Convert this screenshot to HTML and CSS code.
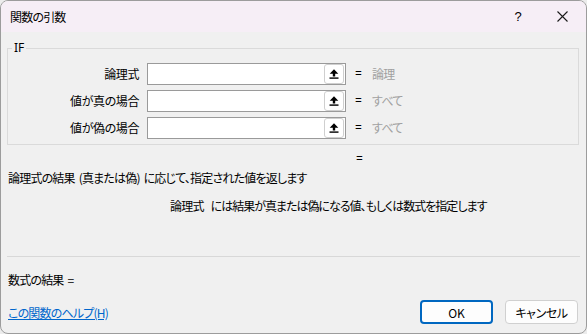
FILE: index.html
```html
<!DOCTYPE html>
<html lang="ja">
<head>
<meta charset="utf-8">
<title>関数の引数</title>
<link rel="stylesheet" href="styles.css">
</head>
<body>
<div class="window">
  <div class="titlebar">
    <span class="title">関数の引数</span>
    <span class="tb-help">?</span>
    <span class="tb-close">
      <svg width="11" height="11" viewBox="0 0 11 11"><path d="M0.5 0.5 L10.5 10.5 M10.5 0.5 L0.5 10.5" stroke="#1a1a1a" stroke-width="1.1" fill="none"/></svg>
    </span>
  </div>
  <div class="content">
    <fieldset class="group">
      <legend class="legend">IF</legend>
      <div class="args">
        <label class="arg-label">論理式</label>
        <div class="arg-input"><span class="collapse"><svg width="10" height="10" viewBox="0 0 10 10"><path d="M5 0.3 L9.3 4.8 L6.2 4.8 L6.2 7.4 L3.8 7.4 L3.8 4.8 L0.7 4.8 Z" fill="#000"/><rect x="0.5" y="8.4" width="9" height="1.4" fill="#000"/></svg></span></div>
        <span class="eq">=</span>
        <span class="arg-val">論理</span>

        <label class="arg-label">値が真の場合</label>
        <div class="arg-input"><span class="collapse"><svg width="10" height="10" viewBox="0 0 10 10"><path d="M5 0.3 L9.3 4.8 L6.2 4.8 L6.2 7.4 L3.8 7.4 L3.8 4.8 L0.7 4.8 Z" fill="#000"/><rect x="0.5" y="8.4" width="9" height="1.4" fill="#000"/></svg></span></div>
        <span class="eq">=</span>
        <span class="arg-val">すべて</span>

        <label class="arg-label">値が偽の場合</label>
        <div class="arg-input"><span class="collapse"><svg width="10" height="10" viewBox="0 0 10 10"><path d="M5 0.3 L9.3 4.8 L6.2 4.8 L6.2 7.4 L3.8 7.4 L3.8 4.8 L0.7 4.8 Z" fill="#000"/><rect x="0.5" y="8.4" width="9" height="1.4" fill="#000"/></svg></span></div>
        <span class="eq">=</span>
        <span class="arg-val">すべて</span>
      </div>
    </fieldset>
    <div class="result-eq">=</div>
    <div class="desc">論理式の結果 (真または偽) に応じて、指定された値を返します</div>
    <div class="arg-desc"><span class="arg-name">論理式</span><span class="arg-text">には結果が真または偽になる値、もしくは数式を指定します</span></div>
    <div class="sep"></div>
    <div class="formula">数式の結果 =</div>
    <div class="footer">
      <a class="help" href="#">この関数のヘルプ(H)</a>
      <div class="buttons">
        <button class="btn btn-ok">OK</button>
        <button class="btn">キャンセル</button>
      </div>
    </div>
  </div>
</div>
</body>
</html>
```
FILE: styles.css
```css
html, body {
  margin: 0;
  padding: 0;
}
body {
  background: #ececec;
  font-family: "Noto Sans CJK JP", "Noto Sans", sans-serif;
  font-size: 12px;
  color: #000;
  font-feature-settings: "palt";
  letter-spacing: -0.8px;
  word-spacing: 2px;
}
.window {
  width: 587px;
  height: 334px;
  box-sizing: border-box;
  border: 1px solid #9c9c9c;
  border-radius: 8px;
  overflow: hidden;
  background: #f0f0f0;
  display: flex;
  flex-direction: column;
}
.titlebar {
  height: 31px;
  flex: none;
  background: #f6eef6;
  display: flex;
  align-items: center;
  padding-left: 9px;
}
.title {
  font-size: 12px;
  line-height: 16px;
  margin-top: 1px;
}
.tb-help {
  margin-left: auto;
  font-family: "Liberation Sans", sans-serif;
  font-size: 13px;
  letter-spacing: 0;
  width: 12px;
  text-align: center;
  margin-right: 33px;
}
.tb-close {
  width: 11px;
  height: 11px;
  display: flex;
  margin-right: 18px;
}
.content {
  flex: 1;
  padding: 0 7px 0 6px;
  display: flex;
  flex-direction: column;
}
.group {
  margin: 8px 0 0 0;
  padding: 7px 0 5px 0;
  border: 1px solid #dadada;
  min-width: 0;
}
.legend {
  padding: 0 2px;
  margin-left: 4px;
  line-height: 16px;
  font-family: "Noto Sans", sans-serif;
  font-size: 12px;
  letter-spacing: 0;
}
.args {
  display: grid;
  grid-template-columns: 131px 199px 8px auto;
  column-gap: 8px;
  row-gap: 5px;
  align-items: center;
}
.arg-label {
  text-align: right;
  line-height: 16px;
  letter-spacing: -0.4px;
}
.arg-input {
  height: 22px;
  box-sizing: border-box;
  border: 1px solid #9a9a9a;
  background: #fff;
  display: flex;
  justify-content: flex-end;
  align-items: stretch;
  padding: 0 1px 0 0;
}
.collapse {
  width: 20px;
  box-sizing: border-box;
  border: 1px solid #cfcfcf;
  border-radius: 3px;
  background: #fff;
  display: flex;
  align-items: center;
  justify-content: center;
}
.collapse svg {
  display: block;
}
.eq {
  margin-left: 1px;
  line-height: 16px;
  font-family: "Noto Sans", sans-serif;
  letter-spacing: 0;
}
.arg-val {
  margin-left: 2px;
  color: #a0a0a0;
  line-height: 16px;
}
.result-eq {
  margin-top: 6px;
  padding-left: 349px;
  line-height: 16px;
  font-family: "Noto Sans", sans-serif;
  letter-spacing: 0;
}
.desc {
  margin-top: 3px;
  padding-left: 1px;
  line-height: 16px;
}
.arg-desc {
  margin-top: 12px;
  padding-left: 163px;
  line-height: 16px;
  display: flex;
  gap: 7px;
}
.arg-text {
  letter-spacing: -1px;
}
.sep {
  margin-top: 42px;
  height: 1px;
  background: #d8d8d8;
  margin-left: 0;
  margin-right: -1px;
}
.formula {
  margin-top: 15px;
  padding-left: 1px;
  line-height: 16px;
}
.footer {
  margin-top: 12px;
  display: flex;
  align-items: center;
  padding-left: 1px;
}
.help {
  color: #0066cc;
  text-decoration: underline;
  line-height: 16px;
  margin-top: 2px;
}
.buttons {
  margin-left: auto;
  display: flex;
  gap: 12px;
  margin-right: 1px;
}
.btn {
  width: 73px;
  height: 24px;
  box-sizing: border-box;
  border: 1px solid #d0d0d0;
  border-radius: 4px;
  background: #fdfdfd;
  font-family: "Noto Sans CJK JP", "Noto Sans", sans-serif;
  font-feature-settings: "palt";
  font-size: 12px;
  letter-spacing: -0.4px;
  color: #000;
  padding: 0;
}
.btn-ok {
  border: 2px solid #0067c0;
  letter-spacing: 0;
}
```
